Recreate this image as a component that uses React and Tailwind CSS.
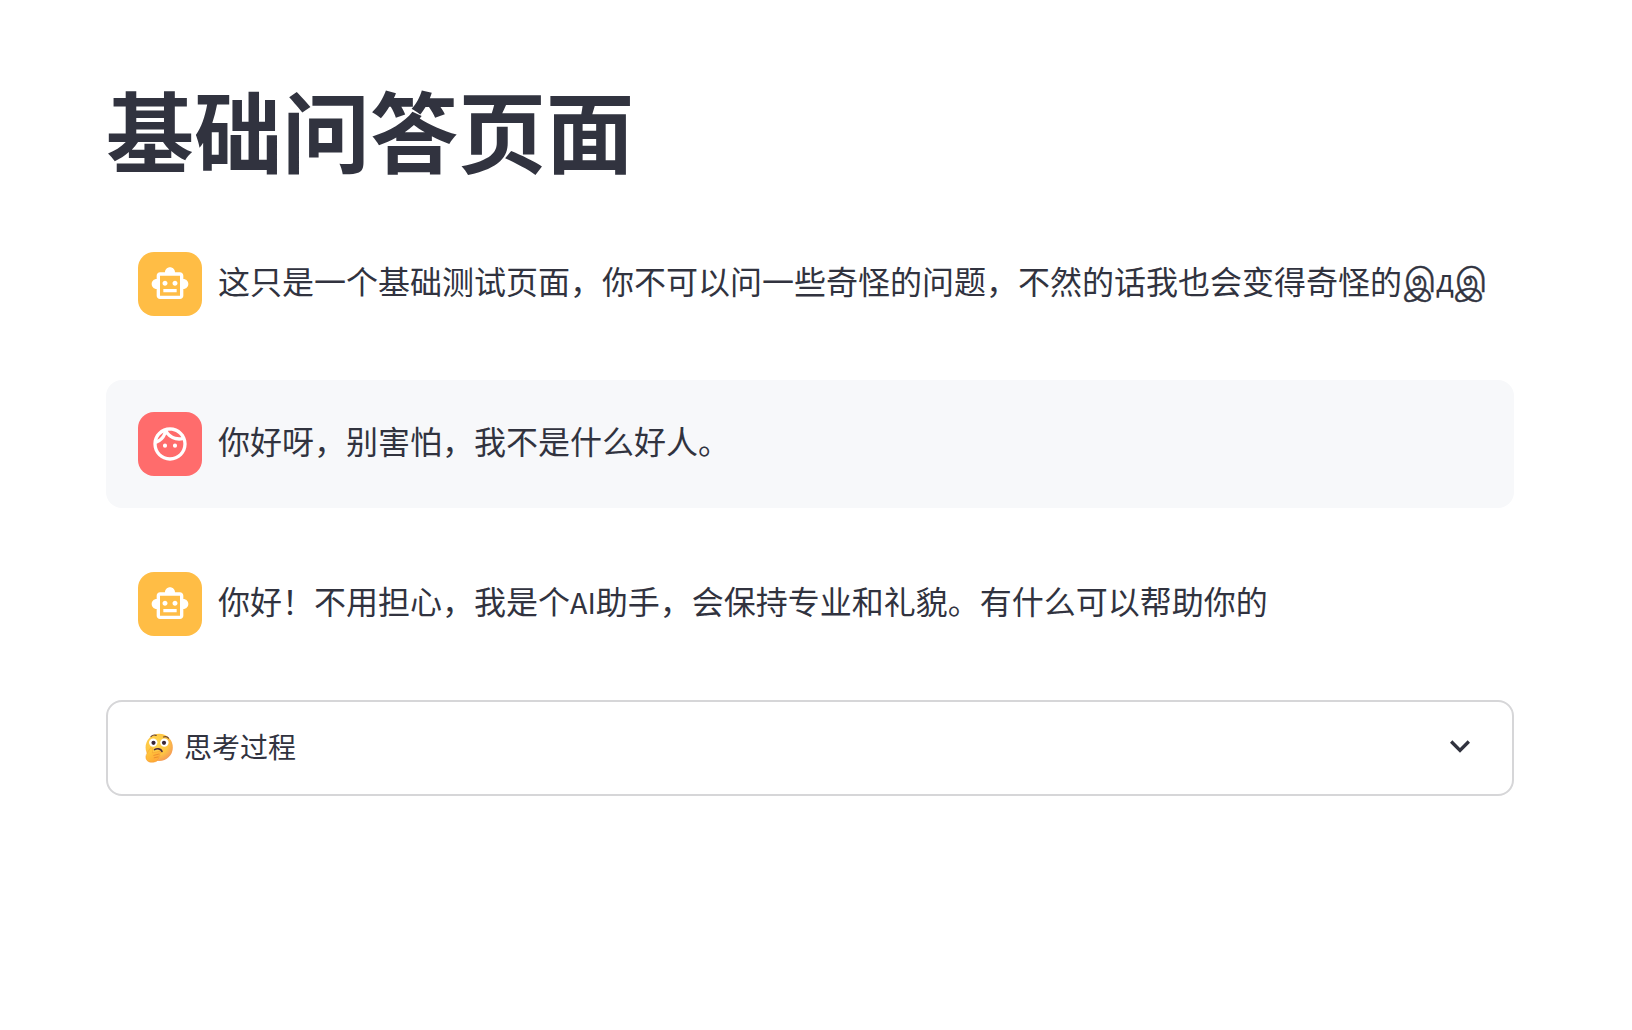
import { MdOutlineFace, MdOutlineSmartToy, MdExpandMore } from "react-icons/md";

const messages = [
  {
    id: 1,
    role: "assistant",
    content: (
      <>
        这只是一个基础测试页面，你不可以问一些奇怪的问题，不然的话我也会变得奇怪的
        <Kaomoji />
      </>
    ),
  },
  { id: 2, role: "user", content: "你好呀，别害怕，我不是什么好人。" },
  {
    id: 3,
    role: "assistant",
    content: (
      <>
        你好！不用担心，我是个<span className="text-[28.6px]">AI</span>
        助手，会保持专业和礼貌。有什么可以帮助你的
      </>
    ),
  },
];

function Kaomoji() {
  return (
    <span className="ml-[2px] inline-flex h-8 items-baseline align-[2px] leading-8">
      <span className="text-[33px] [-webkit-text-stroke:0.5px_#31333f]">
        இ
      </span>
      <span className="mr-px font-['Open_Sans'] text-[31px]">д</span>
      <span className="text-[33px] [-webkit-text-stroke:0.5px_#31333f]">
        இ
      </span>
    </span>
  );
}

function ThinkingIcon() {
  return (
    <svg width="28" height="30" viewBox="0 0 28 30" fill="none">
      <defs>
        <radialGradient id="face" cx="0.4" cy="0.35" r="0.72">
          <stop offset="0" stopColor="#ffd950" />
          <stop offset="0.6" stopColor="#fec544" />
          <stop offset="1" stopColor="#f3935a" />
        </radialGradient>
        <linearGradient id="hand" x1="0" y1="0" x2="0.7" y2="1">
          <stop offset="0" stopColor="#ffd23c" />
          <stop offset="1" stopColor="#ffa637" />
        </linearGradient>
      </defs>
      <circle cx="14.2" cy="14.4" r="13.6" fill="url(#face)" />
      <circle cx="8.2" cy="9.6" r="4.2" fill="#fff" />
      <circle cx="19.4" cy="9.6" r="4.2" fill="#fff" />
      <circle cx="8.5" cy="9.8" r="2.1" fill="#3b2736" />
      <circle cx="19" cy="9.8" r="2.1" fill="#3b2736" />
      <path
        d="M6 3.600c1.300-1.500 3.400-1.900 5.200-1.200M18.500 4c1.900-.8 3.900-.3 5 1.200"
        stroke="#6b4430"
        strokeWidth="1.2"
        strokeLinecap="round"
      />
      <path
        d="M9.600 16.600c2.400-1.500 6.300-1 7.400 1.800"
        stroke="#4b2a3a"
        strokeWidth="1.6"
        strokeLinecap="round"
      />
      {/* hand resting on the chin */}
      <path
        d="M5.200 15.200c1.500-.9 2.900.1 2.700 1.700l-.5 3 6.600-1.600c1.900-.4 2.500 1.700.8 2.400l-1 .4c1.500.4 1.500 2.300-.1 2.700.8.9.2 2.100-1 2.400.1 1.400-1 2.100-2.300 2.500-3.100.9-6.600.9-8.400-1.300-1.800-2.200-1.300-5.300.4-7.700z"
        fill="url(#hand)"
        stroke="#f29a32"
        strokeWidth="0.5"
      />
      <path
        d="M8.800 22.400l4.600-1.200M9.200 24.800l3.800-.9"
        stroke="#e57c2c"
        strokeWidth="0.7"
        strokeLinecap="round"
      />
    </svg>
  );
}

function Avatar({ role }) {
  const isUser = role === "user";
  return (
    <div
      className={`flex size-16 shrink-0 items-center justify-center rounded-2xl text-white ${
        isUser ? "bg-[#ff6c6c]" : "bg-[#ffbd45]"
      }`}
    >
      {isUser ? <MdOutlineFace size={40} /> : <MdOutlineSmartToy size={40} />}
    </div>
  );
}

function ChatMessage({ role, children }) {
  return (
    <div
      className={`flex items-start gap-4 rounded-2xl p-8 ${
        role === "user" ? "bg-[#f7f8fa]" : ""
      }`}
    >
      <Avatar role={role} />
      <p className="h-16 whitespace-nowrap pt-[3px] text-[32px] leading-[51px]">
        {children}
      </p>
    </div>
  );
}

function App() {
  return (
    <main
      lang="zh-CN"
      className="min-h-screen bg-white px-[106px] pt-[75px] font-['Noto_Sans_CJK_SC',sans-serif] text-[#31333f]"
    >
      <div className="w-[1408px]">
        <h1 className="text-[88px] font-bold leading-[106px]">基础问答页面</h1>
        <div className="mt-[39px] flex flex-col gap-8">
          {messages.map((m) => (
            <ChatMessage key={m.id} role={m.role}>
              {m.content}
            </ChatMessage>
          ))}
          <div className="flex h-24 items-center justify-between rounded-2xl border-2 border-[#d6d6d8] pb-1 pl-[37px] pr-8">
            <div className="flex items-center gap-[11px] text-[28px]">
              <span className="mt-1">
                <ThinkingIcon />
              </span>
              <span>思考过程</span>
            </div>
            <MdExpandMore size={40} />
          </div>
        </div>
      </div>
    </main>
  );
}

export default App;
